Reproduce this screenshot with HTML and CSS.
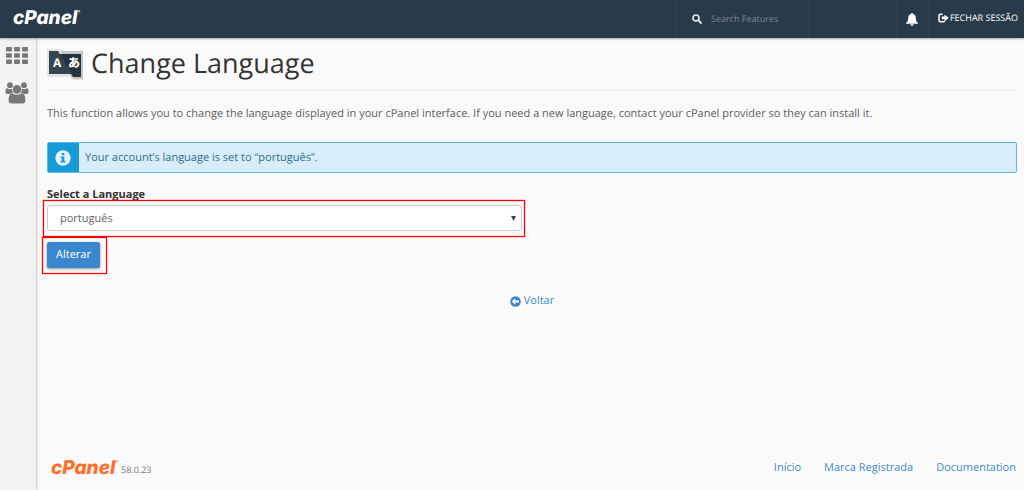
FILE: index.html
```html
<!DOCTYPE html>
<html lang="pt">
<head>
<meta charset="utf-8">
<meta name="viewport" content="width=device-width, initial-scale=1">
<title>Change Language</title>
<link rel="stylesheet" href="styles.css">
</head>
<body>
<header class="topbar">
  <a class="brand" href="#"><span>cPanel</span><sup>®</sup></a>
  <div class="tools">
    <div class="search">
      <svg width="10" height="10" viewBox="0 0 10 10" aria-hidden="true"><circle cx="4" cy="4" r="3" fill="none" stroke="#e3e7ea" stroke-width="1.6"/><path d="M6.2 6.2L9 9" stroke="#e3e7ea" stroke-width="1.9" stroke-linecap="round"/></svg>
      <input type="text" placeholder="Search Features" aria-label="Search Features">
    </div>
    <button class="bell" aria-label="Notifications">
      <svg width="12" height="13" viewBox="0 0 12 13" aria-hidden="true"><path d="M6 0C6.6 0 6.9.4 6.9 1C9 1.5 9.8 3.2 9.8 5C9.8 7.8 10.6 9 12 10.200V10.800H0V10.200C1.400 9 2.200 7.800 2.200 5C2.200 3.200 3 1.500 5.100 1C5.100.4 5.400 0 6 0ZM4.400 11.200H7.600C7.500 12.200 6.900 12.700 6 12.700S4.500 12.200 4.400 11.200Z" fill="#fff"/></svg>
    </button>
    <a class="logout" href="#"><svg width="11" height="10" viewBox="0 0 11 10" aria-hidden="true"><path d="M4.500 1.200H2.500Q1 1.200 1 2.700V7.300Q1 8.800 2.500 8.800H5.500Q6.600 8.800 6.700 7.700" fill="none" stroke="#fff" stroke-width="1.500"/><path d="M3.800 3.600H6.500V1.400L10.800 4.900L6.500 8.300V6.200H3.800Z" fill="#fff"/></svg><span>FECHAR SESSÃO</span></a>
  </div>
</header>
<div class="shell">
  <nav class="sidebar">
    <a href="#" aria-label="Home"><svg width="22" height="17" viewBox="0 0 22 17" fill="#777" aria-hidden="true"><rect width="6" height="4.500" rx="1"/><rect x="8" width="6" height="4.500" rx="1"/><rect x="16" width="6" height="4.500" rx="1"/><rect y="6.200" width="6" height="4.500" rx="1"/><rect x="8" y="6.200" width="6" height="4.500" rx="1"/><rect x="16" y="6.200" width="6" height="4.500" rx="1"/><rect y="12.400" width="6" height="4.500" rx="1"/><rect x="8" y="12.400" width="6" height="4.500" rx="1"/><rect x="16" y="12.400" width="6" height="4.500" rx="1"/></svg></a>
    <a href="#" aria-label="Users"><svg width="24" height="22" viewBox="0 0 24 22" fill="#777" aria-hidden="true"><circle cx="5" cy="3.200" r="2.900"/><circle cx="19" cy="3.200" r="2.900"/><path d="M2.300 6.200C4 7.400 5.700 7.300 7 6.700Q6.900 9 8.200 10.500Q6.500 10.600 5.300 12H2.500Q.4 12 .4 9.800Q.5 6.500 2.300 6.200ZM21.700 6.200C20 7.400 18.300 7.300 17 6.700Q17.100 9 15.800 10.500Q17.500 10.600 18.700 12H21.500Q23.600 12 23.600 9.800Q23.500 6.500 21.700 6.200Z"/><circle cx="12" cy="7.400" r="4.300"/><path d="M7.500 11.300Q12 14.400 16.500 11.300C19.500 11.500 20.400 14.800 20.400 18.500Q20.400 21.500 17.400 21.500H6.600Q3.600 21.500 3.600 18.500C3.600 14.800 4.500 11.500 7.500 11.300Z"/></svg></a>
  </nav>
  <div class="page">
    <main>
      <h1 class="title">
        <svg width="37" height="32" viewBox="0 0 37 32" aria-hidden="true"><path d="M0 1H14L17 4H36V32H26L22 29H0Z" fill="#e4e4e4"/><path d="M14 3H36V31H26L22 26Z" fill="#c4c5c6"/><path d="M11 6H34V29H26Z" fill="#25323d"/><path d="M2 3H11L25 26H2Z" fill="#364651"/><text class="glyph" x="6" y="19">A</text><text class="glyph glyph-kana" x="21" y="19">あ</text></svg>
        <span>Change Language</span>
      </h1>
      <p class="intro">This function allows you to change the language displayed in your cPanel interface. If you need a new language, contact your cPanel provider so they can install it.</p>
      <div class="notice" role="status">
        <div class="notice-icon"><svg width="16" height="16" viewBox="0 0 16 16" aria-hidden="true"><circle cx="8" cy="8" r="7.700" fill="#e2f3fc"/><path d="M6.800 3H9.300V5.200H6.800ZM5.800 6.500H9.300V10.800H10.300V12.500H5.700V10.800H6.700V8H5.800Z" fill="#179bd7"/></svg></div>
        <p>Your account’s language is set to “português”.</p>
      </div>
      <form class="form">
        <label for="language">Select a Language</label>
        <div class="field marked">
          <select id="language"><option>português</option></select>
          <svg class="caret" width="5" height="5" viewBox="0 0 5 5" aria-hidden="true"><path d="M0 0H5L2.500 5Z" fill="#444"/></svg>
        </div>
        <div class="action marked"><button class="submit" type="button">Alterar</button></div>
      </form>
      <a class="back" href="#"><svg width="11" height="11" viewBox="0 0 11 11" aria-hidden="true"><circle cx="5.500" cy="5.500" r="5.300" fill="#3a87c8"/><path d="M1.700 5.500L5.300 2.200V4.500H9V6.500H5.300V8.800Z" fill="#fff"/></svg><span>Voltar</span></a>
    </main>
    <footer class="footer">
      <a class="brand brand-orange" href="#"><span>cPanel</span><sup>®</sup></a>
      <span class="version">58.0.23</span>
      <nav class="links"><a href="#">Início</a><a href="#">Marca Registrada</a><a href="#">Documentation</a></nav>
    </footer>
  </div>
</div>
</body>
</html>
```
FILE: styles.css
```css
* { box-sizing: border-box; }
body {
  margin: 0;
  min-height: 100vh;
  display: flex;
  flex-direction: column;
  background: #fafafa;
  color: #606060;
  font: 11px/16px "Open Sans", "Noto Sans CJK JP", sans-serif;
  text-rendering: geometricPrecision;
}
a { color: #428bca; text-decoration: none; }
p { margin: 0; }
svg { flex: none; display: block; }
.topbar {
  position: relative;
  display: flex;
  justify-content: space-between;
  height: 38px;
  padding-left: 13px;
  background: #293a4a;
  box-shadow: 0 1px 2px #0005;
}
.brand {
  display: flex;
  align-items: center;
  color: #fff;
  font-family: Inter, sans-serif;
  font-size: 19px;
  font-weight: 800;
  font-style: italic;
  line-height: 20px;
}
.brand sup { align-self: flex-start; font-size: 4px; line-height: 8px; }
.topbar .brand { padding-bottom: 2px; }
.topbar .brand sup { margin-top: 8px; }
.brand-orange { color: #ff6c2c; }
.tools { display: flex; }
.search {
  display: flex;
  align-items: center;
  gap: 9px;
  width: 133px;
  margin-right: 87px;
  padding-left: 15px;
  border: solid #304253;
  border-width: 0 1px;
}
.search input {
  width: 90px;
  padding: 0;
  border: 0;
  background: none;
  color: #fff;
  font: 9px/16px "Open Sans", sans-serif;
  text-rendering: inherit;
}
.search input::placeholder { color: #7d8891; }
.bell {
  display: flex;
  align-items: center;
  justify-content: center;
  width: 33px;
  padding: 0;
  border: solid #304253;
  border-width: 0 1px;
  background: none;
}
.logout {
  display: flex;
  align-items: center;
  gap: 1px;
  padding: 0 6px 2px 9px;
  color: #fff;
  font-size: 9px;
}
.shell { flex: 1; display: flex; }
.sidebar {
  flex: none;
  display: flex;
  flex-direction: column;
  align-items: center;
  gap: 18px;
  width: 36px;
  padding: 9px 3px 0 0;
  background: #f3f3f3;
  box-shadow: 0 0 3px #0006;
}
.page { flex: 1; display: flex; flex-direction: column; padding: 0 7px 0 11px; }
.title {
  display: flex;
  align-items: center;
  gap: 7px;
  height: 53px;
  margin: 0 0 15px;
  border-bottom: 1px solid #eee;
  color: #333;
  font-size: 27px;
  font-weight: 400;
  line-height: 40px;
}
.title span { padding-bottom: 3px; }
.glyph { fill: #fff; font: 700 12px "Open Sans", sans-serif; }
.glyph-kana { font: 900 12px "Noto Sans CJK JP", sans-serif; }
.notice {
  display: flex;
  margin: 20px 0 14px;
  border: 1px solid #5bb8e0;
  border-radius: 2px;
  background: #d7edf9;
  color: #31708f;
}
.notice-icon { display: flex; align-items: center; padding: 0 8px 0 7px; background: #179bd7; }
.notice p { padding: 7px 6px; line-height: 15px; }
.form { display: flex; flex-direction: column; align-items: flex-start; }
.form label { color: #333; font-weight: 700; }
.marked { position: relative; }
.marked::after {
  content: "";
  position: absolute;
  border: 1px solid #f00;
  box-shadow: 0 0 1px #f00, inset 0 0 1px #f00;
  pointer-events: none;
}
.field { width: 49%; margin: 2px 0 11px; }
.field::after { inset: -5px -3px -6px -4px; }
.field select {
  display: block;
  width: 100%;
  height: 26px;
  padding: 1px 12px 0;
  appearance: none;
  border: 1px solid #ccc;
  border-radius: 3px;
  background: #fff;
  color: #666;
  font: 11px/16px "Open Sans", sans-serif;
  text-rendering: inherit;
}
.caret { position: absolute; top: 11px; right: 6px; }
.action::after { inset: -5px -7px -6px -5px; }
.submit {
  display: block;
  padding: 5px 9px;
  border: 0;
  border-radius: 2px;
  background: #3a87cf;
  box-shadow: 0 1px 3px #0006;
  color: #fff;
  font: 500 11px/16px "Open Sans", sans-serif;
  text-rendering: inherit;
}
.back { display: flex; align-items: center; justify-content: center; gap: 3px; margin-top: 25px; }
.footer { display: flex; align-items: center; margin-top: auto; padding: 0 1px 12px 4px; }
.version { padding: 3px 0 0 3px; color: #777; font-size: 9px; line-height: 12px; }
.links { display: flex; gap: 23px; margin-left: auto; }
```
